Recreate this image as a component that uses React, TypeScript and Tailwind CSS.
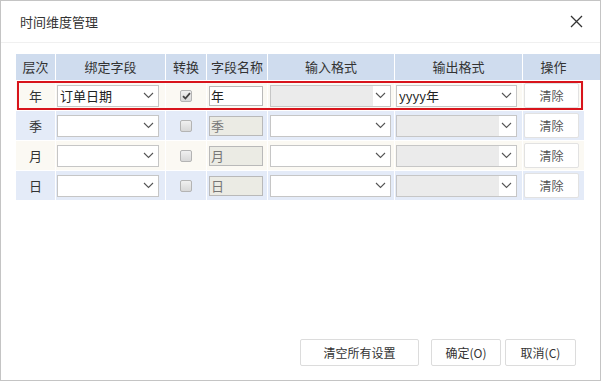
import React from 'react';

const font = { fontFamily: '"Noto Sans CJK SC", "Noto Sans", sans-serif' };

function Chevron() {
  return (
    <svg width="11" height="7" viewBox="0 0 11 7" className="shrink-0">
      <path d="M1 1 L5.5 5.5 L10 1" fill="none" stroke="#555" strokeWidth="1.1" />
    </svg>
  );
}

function Select({ value, disabled, className }: { value?: string; disabled?: boolean; className: string }) {
  return (
    <div className={`flex h-[22px] items-center border border-[#c6c6c6] ${className}`}>
      <div className={`flex h-full flex-1 items-center pl-[2px] text-[13px] text-[#222] ${disabled ? 'bg-[#ebebeb]' : 'bg-white'}`}>
        {value}
      </div>
      <div className="flex h-full w-[17px] items-center justify-center bg-white pr-[2px]">
        <Chevron />
      </div>
    </div>
  );
}

function Checkbox({ checked }: { checked?: boolean }) {
  return (
    <div className="flex h-[12px] w-[12px] items-center justify-center rounded-[2px] border border-[#b4b4b4] bg-gradient-to-b from-[#f0f0f0] to-[#d8d8d8]">
      {checked && (
        <svg width="9" height="8" viewBox="0 0 9 8">
          <path d="M1 4.2 L3.4 6.5 L8 1.2" fill="none" stroke="#444" strokeWidth="1.8" />
        </svg>
      )}
    </div>
  );
}

const rows = [
  { level: '年', field: '订单日期', checked: true, name: '年', inputDisabled: true, output: 'yyyy年', outputDisabled: false, bg: 'bg-[#fbf9f3]' },
  { level: '季', field: '', checked: false, name: '季', inputDisabled: false, output: '', outputDisabled: true, bg: 'bg-[#e4ebf8]' },
  { level: '月', field: '', checked: false, name: '月', inputDisabled: false, output: '', outputDisabled: true, bg: 'bg-[#fbf9f3]' },
  { level: '日', field: '', checked: false, name: '日', inputDisabled: false, output: '', outputDisabled: true, bg: 'bg-[#e4ebf8]' },
];

const headers = [
  { label: '层次', w: 'w-[40px]' },
  { label: '绑定字段', w: 'w-[110px]' },
  { label: '转换', w: 'w-[41px]' },
  { label: '字段名称', w: 'w-[61px]' },
  { label: '输入格式', w: 'w-[127px]' },
  { label: '输出格式', w: 'w-[128px]' },
  { label: '操作', w: 'w-[61px]' },
];

export default function App() {
  return (
    <div style={font} className="flex h-[381px] w-[601px] flex-col border border-[#c4c4c4] bg-white text-[#333]">
      <div className="flex h-[42px] shrink-0 items-center justify-between border-b border-[#f0f0f0] pl-[19px] pr-[17px]">
        <span className="text-[13px] text-[#333]">时间维度管理</span>
        <svg width="13" height="13" viewBox="0 0 13 13">
          <path d="M1 1 L12 12 M12 1 L1 12" stroke="#333" strokeWidth="1.3" />
        </svg>
      </div>

      <div className="mt-[11px] flex flex-col pl-[15px]">
        <div className="flex h-[26px] bg-[#cfdcee] text-[13px] text-[#333]">
          {headers.map((h, i) => (
            <div
              key={h.label}
              className={`${h.w} flex items-center justify-center ${i < headers.length - 1 ? 'border-r border-white' : ''}`}
            >
              {h.label}
            </div>
          ))}
        </div>

        {rows.map((r, i) => (
          <div key={r.level} className={`relative mt-[1px] flex h-[29px] w-[568px] ${r.bg}`}>
            <div className="flex w-[40px] items-center justify-center border-r border-white text-[13px]">{r.level}</div>
            <div className="flex w-[110px] items-center border-r border-white pl-[1px]">
              <Select value={r.field} className="w-[102px]" />
            </div>
            <div className="flex w-[41px] items-center justify-center border-r border-white">
              <Checkbox checked={r.checked} />
            </div>
            <div className="flex w-[61px] items-center border-r border-white pl-[2px]">
              <div
                className={`flex h-[20px] w-[54px] items-center border border-[#b9b9b9] pl-[1px] text-[13px] ${
                  r.checked ? 'bg-white text-[#222]' : 'bg-[#ebebe4] text-[#777]'
                }`}
              >
                {r.name}
              </div>
            </div>
            <div className="flex w-[127px] items-center border-r border-white pl-[2px]">
              <Select disabled={r.inputDisabled} className="w-[121px]" />
            </div>
            <div className="flex w-[128px] items-center border-r border-white pl-[1px]">
              <Select value={r.output} disabled={r.outputDisabled} className="w-[121px]" />
            </div>
            <div className="flex w-[61px] items-center pl-[1px]">
              <button className="h-[25px] w-[55px] rounded-[2px] border border-[#e2e2e2] bg-white text-[12px] text-[#555]">
                清除
              </button>
            </div>
            {i === 0 && <div className="pointer-events-none absolute inset-y-0 left-[1px] right-[1px] border-2 border-[#d8141c]" />}
          </div>
        ))}
      </div>

      <div className="mt-auto flex justify-end pb-[14px] pr-[24px] text-[12px] text-[#333]">
        <button className="h-[27px] w-[119px] rounded-[2px] border border-[#dcdcdc] bg-white">清空所有设置</button>
        <button className="ml-[12px] h-[27px] w-[70px] rounded-[2px] border border-[#dcdcdc] bg-white">确定(O)</button>
        <button className="ml-[4px] h-[27px] w-[71px] rounded-[2px] border border-[#dcdcdc] bg-white">取消(C)</button>
      </div>
    </div>
  );
}
